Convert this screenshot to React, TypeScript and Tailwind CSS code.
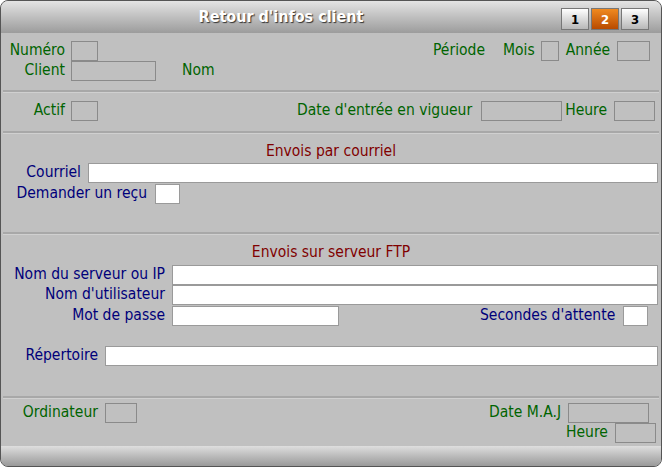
const font = { fontFamily: '"DejaVu Sans Condensed", "DejaVu Sans", sans-serif' };

function Box({ w, white }: { w: string; white?: boolean }) {
  return (
    <div
      className={`${w} h-[20px] shrink-0 border ${
        white ? "border-[#9a9a9a] bg-white" : "border-[#8a8a8a] bg-[#c0c0c0]"
      }`}
    />
  );
}

function G({ children, cls = "" }: { children: React.ReactNode; cls?: string }) {
  return <span className={`text-[#006400] whitespace-nowrap ${cls}`}>{children}</span>;
}
function B({ children, cls = "" }: { children: React.ReactNode; cls?: string }) {
  return <span className={`text-[#00007a] whitespace-nowrap ${cls}`}>{children}</span>;
}

function Sep() {
  return <div className="h-[3px] border-t-2 border-[#a8a8a8] bg-[#d0d0d0] mx-[2px]" />;
}

export default function App() {
  return (
    <div style={font} className="w-[662px] h-[467px] bg-white text-[15.5px] leading-none">
      <div className="w-full h-full rounded-[8px] border border-[#555] bg-[#c0c0c0] overflow-hidden flex flex-col">
        <div className="h-[32px] bg-gradient-to-b from-[#e4e4e4] to-[#9c9c9c] flex items-center relative shrink-0">
          <div className="w-[560px] text-center font-bold text-white text-[16px] [text-shadow:1px_1px_1px_#333]">
            Retour d'infos client
          </div>
          <div className="flex gap-[2px] absolute left-[560px] top-[7px]">
            {["1", "2", "3"].map((n) => (
              <div
                key={n}
                className={`w-[28px] h-[22px] flex items-center justify-center font-bold text-[13px] border border-[#777] ${
                  n === "2"
                    ? "bg-gradient-to-b from-[#f08a20] to-[#b84a00] text-white"
                    : "bg-gradient-to-b from-white to-[#b8b8b8] text-black"
                }`}
              >
                {n}
              </div>
            ))}
          </div>
        </div>

        <div className="pt-[7px] h-[57px]">
          <div className="flex items-center h-[21px]">
            <G cls="w-[64px] text-right">Numéro</G>
            <div className="ml-[6px]"><Box w="w-[27px]" /></div>
            <G cls="ml-[335px]">Période</G>
            <G cls="ml-[18px]">Mois</G>
            <div className="ml-[6px]"><Box w="w-[18px]" /></div>
            <G cls="ml-[7px]">Année</G>
            <div className="ml-[7px]"><Box w="w-[33px]" /></div>
          </div>
          <div className="flex items-center h-[20px]">
            <G cls="w-[64px] text-right">Client</G>
            <div className="ml-[6px]"><Box w="w-[85px]" /></div>
            <G cls="ml-[26px]">Nom</G>
          </div>
        </div>
        <Sep />
        <div className="pt-[7px] h-[38px]">
          <div className="flex items-center h-[22px]">
            <G cls="w-[64px] text-right">Actif</G>
            <div className="ml-[6px]"><Box w="w-[27px]" /></div>
            <G cls="ml-[199px]">Date d'entrée en vigueur</G>
            <div className="ml-[9px]"><Box w="w-[81px]" /></div>
            <G cls="ml-[3px]">Heure</G>
            <div className="ml-[7px]"><Box w="w-[41px]" /></div>
          </div>
        </div>
        <Sep />
        <div className="h-[98px] pt-[10px]">
          <div className="text-center text-[#800000] w-[660px] h-[19px]">Envois par courriel</div>
          <div className="flex items-center h-[20px]">
            <B cls="w-[80px] text-right">Courriel</B>
            <div className="ml-[7px]"><Box w="w-[570px]" white /></div>
          </div>
          <div className="flex items-center h-[21px]">
            <B cls="w-[146px] text-right">Demander un reçu</B>
            <div className="ml-[8px]"><Box w="w-[25px]" white /></div>
          </div>
        </div>
        <Sep />
        <div className="h-[161px] pt-[10px]">
          <div className="text-center text-[#800000] w-[660px] h-[19px]">Envois sur serveur FTP</div>
          <div className="flex items-center h-[21px]">
            <B cls="w-[164px] text-right">Nom du serveur ou IP</B>
            <div className="ml-[7px]"><Box w="w-[486px]" white /></div>
          </div>
          <div className="flex items-center h-[20px]">
            <B cls="w-[164px] text-right">Nom d'utilisateur</B>
            <div className="ml-[7px]"><Box w="w-[486px]" white /></div>
          </div>
          <div className="flex items-center h-[21px]">
            <B cls="w-[164px] text-right">Mot de passe</B>
            <div className="ml-[7px]"><Box w="w-[167px]" white /></div>
            <B cls="ml-[141px] w-[135px]">Secondes d'attente</B>
            <div className="ml-[8px]"><Box w="w-[25px]" white /></div>
          </div>
          <div className="flex items-center h-[20px] mt-[20px]">
            <B cls="w-[97px] text-right">Répertoire</B>
            <div className="ml-[7px]"><Box w="w-[553px]" white /></div>
          </div>
        </div>
        <Sep />
        <div className="pt-[3px] flex-1">
          <div className="flex items-center h-[22px]">
            <G cls="w-[97px] text-right">Ordinateur</G>
            <div className="ml-[7px]"><Box w="w-[32px]" /></div>
            <G cls="ml-[352px]">Date M.A.J</G>
            <div className="ml-[7px]"><Box w="w-[81px]" /></div>
          </div>
          <div className="flex items-center h-[20px] mt-[-1px]">
            <G cls="ml-[565px]">Heure</G>
            <div className="ml-[7px]"><Box w="w-[41px]" /></div>
          </div>
        </div>
        <div className="h-[20px] shrink-0 bg-gradient-to-b from-[#dedede] to-[#9a9a9a]" />
      </div>
    </div>
  );
}
